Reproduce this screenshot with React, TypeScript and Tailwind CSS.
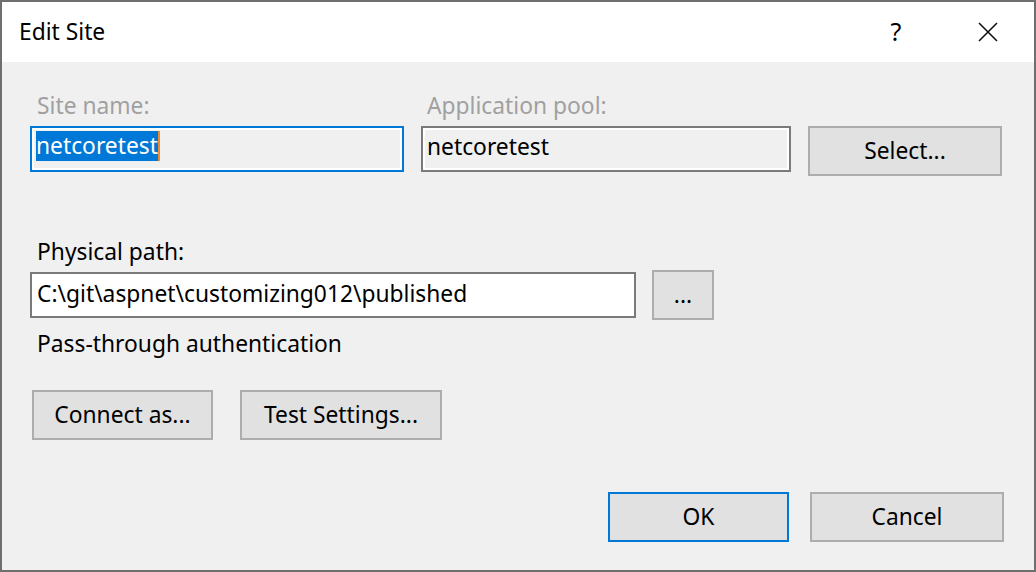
const font = "font-['Noto_Sans','Liberation_Sans',sans-serif]";

const Button = ({ children, className = '', focused = false }: { children: React.ReactNode; className?: string; focused?: boolean }) => (
    <div className={`h-[50px] border-2 ${focused ? 'border-[#0078d7]' : 'border-[#adadad]'} bg-[#e1e1e1] flex items-center justify-center shrink-0 ${className}`}>
        {children}
    </div>
);

export default function App() {
    return (
        <div className={`w-[1036px] h-[572px] border-2 border-[#6f6f6f] bg-[#f0f0f0] flex flex-col text-[22.8px] text-black ${font}`}>
            {/* title bar */}
            <div className="h-[60px] bg-white flex items-center shrink-0">
                <span className="flex-1 pl-[17px]">Edit Site</span>
                <div className="w-[92px] h-full flex items-center justify-center text-[25px]">?</div>
                <div className="w-[92px] h-full flex items-center justify-center">
                    <svg width="20" height="20" viewBox="0 0 20 20">
                        <path d="M1 1 L19 19 M19 1 L1 19" stroke="#111" strokeWidth="1.6" fill="none" />
                    </svg>
                </div>
            </div>

            <div className="flex-1 pl-[28px] pr-[30px]">
                {/* site name / app pool */}
                <div className="mt-[29px] flex gap-[17px]">
                    <div className="w-[374px]">
                        <div className="h-[30px] leading-[30px] pl-[7px] text-[#a0a0a0]">Site name:</div>
                        <div className="mt-[5px] h-[46px] border-2 border-[#0078d7]">
                            <div className="h-full border-2 border-white bg-[#f0f0f0] pl-[2px] pt-[1px] flex items-start">
                                <span className="h-[30px] leading-[30px] bg-[#0078d7] text-white">netcoretest</span>
                                <span className="h-[30px] w-[2px] bg-[#f08a30]" />
                            </div>
                        </div>
                    </div>
                    <div className="w-[370px]">
                        <div className="h-[30px] leading-[30px] pl-[6px] text-[#a0a0a0]">Application pool:</div>
                        <div className="mt-[5px] h-[46px] border-2 border-[#7a7a7a]">
                            <div className="h-full border-2 border-white bg-[#f0f0f0] pl-[2px] pb-[3px] flex items-center">
                                netcoretest
                            </div>
                        </div>
                    </div>
                    <div className="w-[194px] pt-[35px]">
                        <Button className="w-[194px]">Select...</Button>
                    </div>
                </div>

                {/* physical path */}
                <div className="mt-[61px] h-[30px] leading-[30px] pl-[7px]">Physical path:</div>
                <div className="mt-[3px] flex items-center gap-[16px]">
                    <div className="w-[606px] h-[46px] border-2 border-[#7a7a7a] bg-white pl-[5px] pb-[2px] flex items-center">
                        C:\git\aspnet\customizing012\published
                    </div>
                    <Button className="w-[62px]">...</Button>
                </div>
                <div className="mt-[9px] h-[30px] leading-[30px] pl-[7px]">Pass-through authentication</div>

                <div className="mt-[31px] ml-[2px] flex gap-[27px]">
                    <Button className="w-[181px]">Connect as...</Button>
                    <Button className="w-[202px]">Test Settings...</Button>
                </div>

                {/* dialog buttons */}
                <div className="mt-[52px] flex justify-end gap-[21px]">
                    <Button className="w-[181px]" focused>OK</Button>
                    <Button className="w-[194px]">Cancel</Button>
                </div>
            </div>
        </div>
    );
}
